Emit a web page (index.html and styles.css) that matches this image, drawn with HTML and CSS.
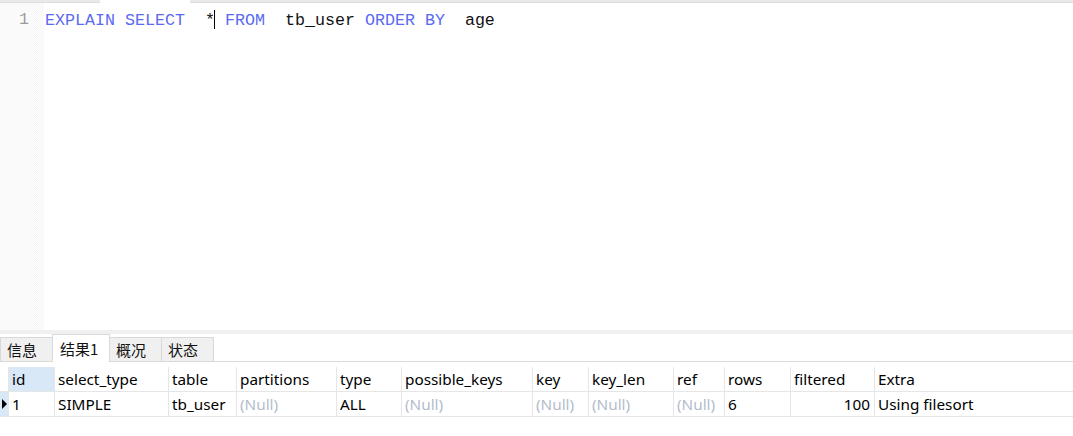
FILE: index.html
```html
<!DOCTYPE html>
<html lang="zh-CN">
<head>
<meta charset="utf-8">
<title>EXPLAIN</title>
<link rel="stylesheet" href="styles.css">
</head>
<body>
<div class="top-strip">
  <div class="strip-a"></div>
  <div class="strip-gap"></div>
  <div class="strip-b"></div>
</div>
<div class="editor">
  <div class="gutter"><div class="ln">1</div></div>
  <div class="fold"></div>
  <div class="code"><div class="line"><span class="kw">EXPLAIN</span> <span class="kw">SELECT</span>  *<span class="caret"></span> <span class="kw">FROM</span>  tb_user <span class="kw">ORDER</span> <span class="kw">BY</span>  age</div></div>
</div>
<div class="band"></div>
<div class="tabbar">
  <div class="tab">信息</div>
  <div class="tab active">结果1</div>
  <div class="tab">概况</div>
  <div class="tab">状态</div>
</div>
<div class="grid">
  <div class="row head">
    <div class="ind"></div>
    <div class="c sel">id</div>
    <div class="c">select_type</div>
    <div class="c">table</div>
    <div class="c">partitions</div>
    <div class="c">type</div>
    <div class="c">possible_keys</div>
    <div class="c">key</div>
    <div class="c">key_len</div>
    <div class="c">ref</div>
    <div class="c">rows</div>
    <div class="c">filtered</div>
    <div class="c last">Extra</div>
  </div>
  <div class="row data">
    <div class="ind cur"><svg width="9" height="24" viewBox="0 0 9 24"><path d="M2 7 L7 12 L2 17 Z" fill="#000"/></svg></div>
    <div class="c">1</div>
    <div class="c">SIMPLE</div>
    <div class="c">tb_user</div>
    <div class="c null">(Null)</div>
    <div class="c">ALL</div>
    <div class="c null">(Null)</div>
    <div class="c null">(Null)</div>
    <div class="c null">(Null)</div>
    <div class="c null">(Null)</div>
    <div class="c">6</div>
    <div class="c num">100</div>
    <div class="c last">Using filesort</div>
  </div>
</div>
</body>
</html>
```
FILE: styles.css
```css
html, body {
  margin: 0;
  padding: 0;
  background: #fff;
  overflow: hidden;
}
body {
  width: 1073px;
  height: 436px;
}
.top-strip {
  display: flex;
  height: 3px;
}
.strip-a { width: 100px; background: #e9e9e9; border-bottom: 1px solid #dedede; box-sizing: border-box; }
.strip-gap { width: 90px; background: #fff; }
.strip-b { flex: 1; background: #e9e9e9; border-bottom: 1px solid #dedede; box-sizing: border-box; }

.editor {
  display: flex;
  height: 327px;
}
.gutter {
  width: 32px;
  background: #fafafa;
}
.ln {
  font-family: "Liberation Mono", "Courier New", monospace;
  font-size: 16.67px;
  line-height: 20px;
  padding-top: 7px;
  text-align: right;
  padding-right: 3px;
  color: #9a9a9a;
}
.fold {
  width: 12px;
  background-color: #fff;
  background-image: repeating-conic-gradient(#f4f4f4 0 25%, #fff 0 50%);
  background-size: 2px 2px;
}
.code {
  flex: 1;
  padding-left: 1px;
}
.line {
  font-family: "Liberation Mono", "Courier New", monospace;
  font-size: 16.67px;
  line-height: 20px;
  padding-top: 7px;
  color: #111;
  white-space: pre;
}
.kw { color: #5a6af2; }
.caret {
  display: inline-block;
  width: 0;
  height: 19px;
  border-left: 1px solid #000;
  margin-left: -1px;
  vertical-align: -4px;
}

.band {
  height: 4px;
  background: #f0f0f0;
}

.tabbar {
  display: flex;
  align-items: flex-end;
  height: 28px;
  box-sizing: border-box;
  border-bottom: 1px solid #dadada;
  background: #fff;
}
.tab {
  box-sizing: border-box;
  height: 24px;
  width: 53px;
  margin-right: -1px;
  padding-left: 6px;
  background: #f0f0f0;
  border: 1px solid #d9d9d9;
  border-bottom: none;
  font-family: "Noto Sans CJK SC", "Noto Sans", sans-serif;
  font-size: 15px;
  line-height: 24px;
  color: #111;
}
.tab.active {
  height: 28px;
  width: 58px;
  margin-bottom: -1px;
  background: #fff;
  padding-left: 7px;
  line-height: 27px;
  position: relative;
  z-index: 1;
}

.grid {
  padding-top: 5px;
}
.row {
  display: grid;
  grid-template-columns: 9px 46px 114px 68px 100px 65px 131px 56px 85px 51px 66px 84px 1fr;
  height: 25px;
  box-sizing: border-box;
  border-bottom: 1px solid #e6e6e6;
}
.c {
  box-sizing: border-box;
  border-right: 1px solid #e6e6e6;
  padding-left: 3px;
  font-family: "Noto Sans", "Open Sans", sans-serif;
  font-size: 15.3px;
  line-height: 24px;
  color: #000;
  white-space: nowrap;
  overflow: hidden;
}
.c.last { border-right: none; }
.c.sel { background: #d9e8f7; }
.c.null { color: #b3bccb; }
.c.num { text-align: right; padding-right: 4px; }
.ind {
  box-sizing: border-box;
  border-right: 1px solid #e6e6e6;
}
.ind.cur { background: #d9e8f7; }
.ind svg { display: block; }
```
